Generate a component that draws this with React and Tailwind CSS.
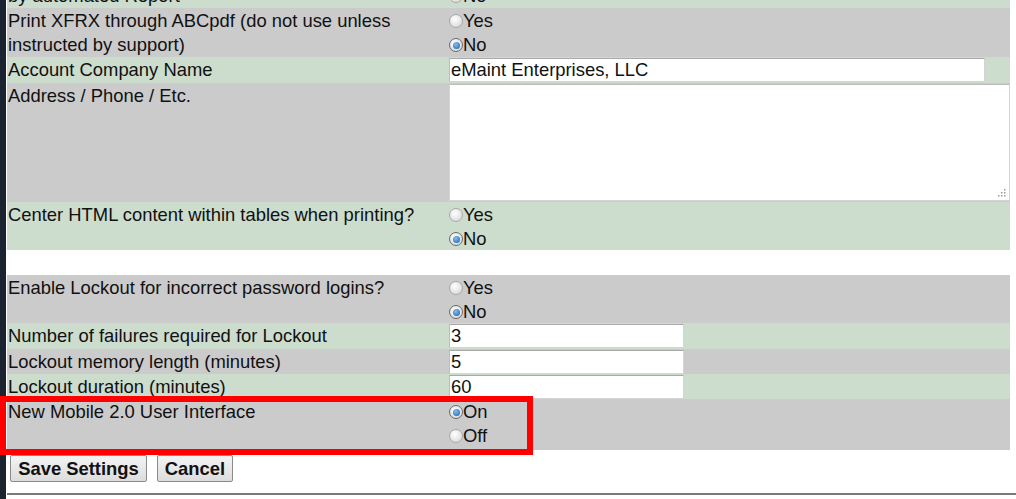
import React from "react";

function Radio({ checked, label }) {
  return (
    <div className="flex items-center h-[24px]">
      <span
        className={
          "w-[14px] h-[14px] rounded-full border flex items-center justify-center shrink-0 " +
          (checked
            ? "border-[#6a6a6a] bg-[radial-gradient(circle_at_40%_35%,#ffffff,#cfcfcf)]"
            : "border-[#a8a8a8] bg-[radial-gradient(circle_at_40%_35%,#ffffff,#d2d2d2)]")
        }
      >
        {checked && (
          <span className="w-[7px] h-[7px] rounded-full bg-[radial-gradient(circle_at_40%_35%,#7fc0f0,#1a5fa8)]" />
        )}
      </span>
      <span>{label}</span>
    </div>
  );
}

function Row({ bg, h, label, children, extra = "" }) {
  return (
    <div className={"grid w-[1003px] grid-cols-[442px_561px] " + bg + " " + h + " " + extra}>
      <div className="pl-[1px] pt-[1px] leading-[24px]">{label}</div>
      <div className="pt-[1px]">{children}</div>
    </div>
  );
}

const green = "bg-[#ccdccd]";
const gray = "bg-[#cbcbcb]";

function TextInput({ value, w }) {
  return (
    <div
      className={
        "h-[24px] bg-white border border-[#d4d4d4] border-t-[#a9a9a9] border-l-[#bdbdbd] pl-[1px] leading-[22px] " +
        w
      }
    >
      {value}
    </div>
  );
}

export default function App() {
  return (
    <div
      className="w-[1016px] h-[499px] bg-white relative overflow-hidden flex text-[18.4px] text-[#111]"
      style={{ fontFamily: '"Liberation Sans", Arial, sans-serif' }}
    >
      <div className="w-[6px] shrink-0 bg-[#1b2330]" />
      <div className="flex-1 flex flex-col pl-[1px]">
        <Row bg={green} h="h-[49px]" label={<>Send reports as attachments<br />by automated Report</>} extra="mt-[-41px]">
          <Radio label="Yes" />
          <Radio label="No" />
        </Row>
        <Row bg={gray} h="h-[49px]" label={<>Print XFRX through ABCpdf (do not use unless<br />instructed by support)</>}>
          <Radio label="Yes" />
          <Radio checked label="No" />
        </Row>
        <Row bg={green} h="h-[26px]" label="Account Company Name">
          <TextInput value="eMaint Enterprises, LLC" w="w-[536px]" />
        </Row>
        <Row bg={gray} h="h-[119px]" label="Address / Phone / Etc.">
          <div className="relative h-[117px] w-[561px] bg-white border border-[#d4d4d4] border-t-[#bdbdbd]">
            <svg className="absolute right-[2px] bottom-[2px]" width="10" height="10" viewBox="0 0 10 10">
              <rect x="7" y="1" width="1.5" height="1.5" fill="#9a9a9a" />
              <rect x="4" y="4" width="1.5" height="1.5" fill="#9a9a9a" />
              <rect x="7" y="4" width="1.5" height="1.5" fill="#9a9a9a" />
              <rect x="1" y="7" width="1.5" height="1.5" fill="#9a9a9a" />
              <rect x="4" y="7" width="1.5" height="1.5" fill="#9a9a9a" />
              <rect x="7" y="7" width="1.5" height="1.5" fill="#9a9a9a" />
            </svg>
          </div>
        </Row>
        <Row bg={green} h="h-[48px]" label="Center HTML content within tables when printing?">
          <Radio label="Yes" />
          <Radio checked label="No" />
        </Row>
        <div className="h-[25px] w-[1003px] bg-white" />
        <Row bg={gray} h="h-[48px]" label="Enable Lockout for incorrect password logins?">
          <Radio label="Yes" />
          <Radio checked label="No" />
        </Row>
        <Row bg={green} h="h-[26px]" label="Number of failures required for Lockout">
          <TextInput value="3" w="w-[235px]" />
        </Row>
        <Row bg={gray} h="h-[25px]" label="Lockout memory length (minutes)">
          <TextInput value="5" w="w-[235px]" />
        </Row>
        <Row bg={green} h="h-[25px]" label="Lockout duration (minutes)">
          <TextInput value="60" w="w-[235px]" />
        </Row>
        <Row bg={gray} h="h-[51px]" label="New Mobile 2.0 User Interface">
          <Radio checked label="On" />
          <Radio label="Off" />
        </Row>
        <div className="flex gap-[10px] pl-[3px] mt-[5px]">
          <button className="h-[27px] w-[137px] font-bold leading-[25px] border border-[#8a8a8a] rounded-[2px] bg-[linear-gradient(#f4f4f4,#dcdcdc)] text-[#111]">
            Save Settings
          </button>
          <button className="h-[27px] w-[76px] font-bold leading-[25px] border border-[#8a8a8a] rounded-[2px] bg-[linear-gradient(#f4f4f4,#dcdcdc)] text-[#111]">
            Cancel
          </button>
        </div>
        <div className="mt-[11px] h-[2px] bg-[#7a7a7a]" />
      </div>
      <div className="absolute left-0 top-[396px] w-[533px] h-[59px] border-[6px] border-[#ff0000]" />
    </div>
  );
}
